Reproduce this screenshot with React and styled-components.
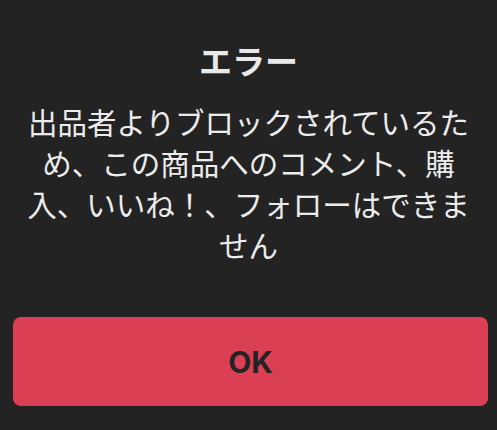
import React from 'react';
import styled, { createGlobalStyle } from 'styled-components';

const GlobalStyle = createGlobalStyle`
  html, body {
    margin: 0;
    padding: 0;
    background: #232323;
  }
  body {
    font-family: "Noto Sans CJK JP", "Noto Sans", sans-serif;
  }
`;

const Dialog = styled.div`
  width: 497px;
  height: 430px;
  box-sizing: border-box;
  background: #232323;
  display: flex;
  flex-direction: column;
  align-items: stretch;
  padding: 40px 0 0;
`;

const Title = styled.h2`
  margin: 0;
  font-size: 33px;
  line-height: 40px;
  font-weight: 700;
  color: #e9e9e9;
  text-align: center;
`;

const Message = styled.p`
  margin: 21px 24px 0;
  font-size: 29.5px;
  line-height: 41px;
  font-weight: 400;
  color: #ececec;
  text-align: center;
`;

const Button = styled.button`
  margin: 52px 9px 0 13px;
  height: 89px;
  border: none;
  border-radius: 8px;
  background: #db3f53;
  color: #232323;
  font-family: "Inter", "Noto Sans CJK JP", sans-serif;
  font-size: 30px;
  font-weight: 700;
  cursor: pointer;
`;

export default function App() {
  return (
    <>
      <GlobalStyle />
      <Dialog>
        <Title>エラー</Title>
        <Message>
          出品者よりブロックされているため、この商品へのコメント、購入、いいね！、フォローはできません
        </Message>
        <Button>OK</Button>
      </Dialog>
    </>
  );
}
